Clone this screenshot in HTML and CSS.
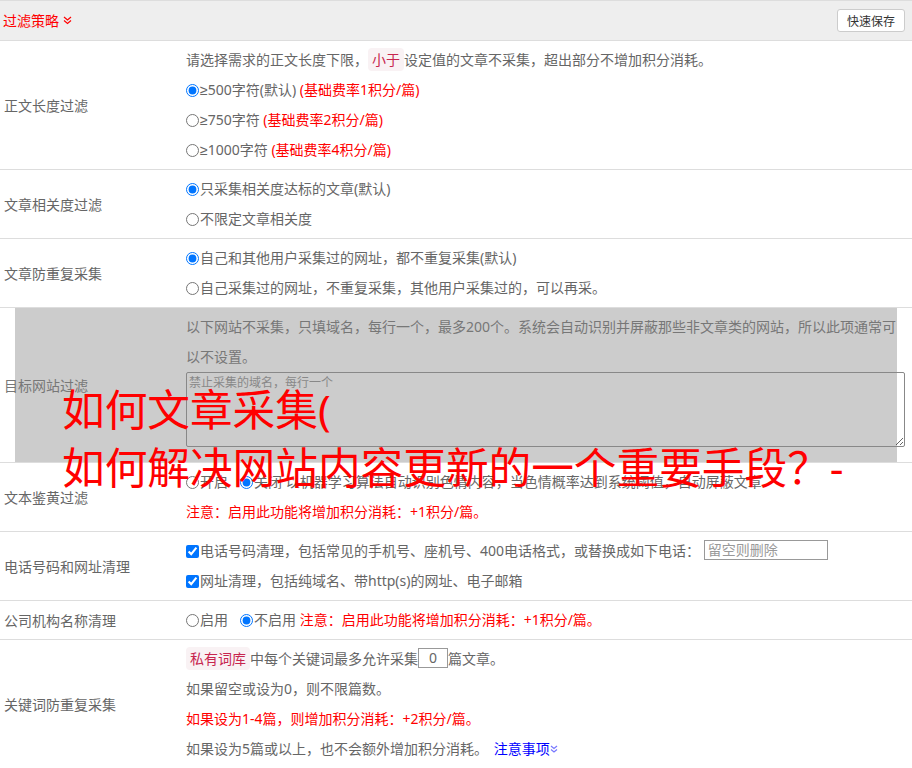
FILE: index.html
```html
<!DOCTYPE html>
<html lang="zh-CN">
<head>
  <meta charset="UTF-8">
  <title>过滤策略</title>
  <link rel="stylesheet" href="styles.css">
</head>
<body>
  <div class="panel">
    <div class="panel-head">
      <span class="head-title">过滤策略
        <svg class="chev" width="9" height="9" viewBox="0 0 9 9"><polyline points="1,1 4.5,4 8,1"/><polyline points="1,4.5 4.5,7.5 8,4.5"/></svg>
      </span>
      <button class="btn-save">快速保存</button>
    </div>

    <!-- 正文长度 -->
    <div class="row">
      <div class="row-label">正文长度过滤</div>
      <div class="row-body">
        <div class="line">请选择需求的正文长度下限，<code class="tag">小于</code>设定值的文章不采集，超出部分不增加积分消耗。</div>
        <div class="line"><label><input type="radio" name="len" checked><span class="ge">≥</span>500字符(默认)</label> <span class="warn">(基础费率1积分/篇)</span></div>
        <div class="line"><label><input type="radio" name="len"><span class="ge">≥</span>750字符</label> <span class="warn">(基础费率2积分/篇)</span></div>
        <div class="line"><label><input type="radio" name="len"><span class="ge">≥</span>1000字符</label> <span class="warn">(基础费率4积分/篇)</span></div>
      </div>
    </div>

    <div class="row">
      <div class="row-label">文章相关度过滤</div>
      <div class="row-body">
        <div class="line"><label><input type="radio" name="rel" checked>只采集相关度达标的文章(默认)</label></div>
        <div class="line"><label><input type="radio" name="rel">不限定文章相关度</label></div>
      </div>
    </div>

    <div class="row">
      <div class="row-label">文章防重复采集</div>
      <div class="row-body">
        <div class="line"><label><input type="radio" name="dup" checked>自己和其他用户采集过的网址，都不重复采集(默认)</label></div>
        <div class="line"><label><input type="radio" name="dup">自己采集过的网址，不重复采集，其他用户采集过的，可以再采。</label></div>
      </div>
    </div>

    <div class="row row-gray">
      <div class="row-label">目标网站过滤</div>
      <div class="row-body">
        <div class="line">以下网站不采集，只填域名，每行一个，最多200个。系统会自动识别并屏蔽那些非文章类的网站，所以此项通常可</div>
        <div class="line">以不设置。</div>
        <textarea class="domains" placeholder="禁止采集的域名，每行一个"></textarea>
      </div>
    </div>

    <div class="row">
      <div class="row-label">文本鉴黄过滤</div>
      <div class="row-body">
        <div class="line"><label class="opt"><input type="radio" name="porn">开启</label><label><input type="radio" name="porn" checked>关闭</label> 以机器学习算法自动识别色情内容，当色情概率达到系统阈值，自动屏蔽文章</div>
        <div class="line warn">注意：启用此功能将增加积分消耗：+1积分/篇。</div>
      </div>
    </div>

    <div class="row">
      <div class="row-label">电话号码和网址清理</div>
      <div class="row-body">
        <div class="line"><label><input type="checkbox" checked>电话号码清理，包括常见的手机号、座机号、400电话格式，或替换成如下电话：</label> <input class="phone" type="text" placeholder="留空则删除"></div>
        <div class="line"><label><input type="checkbox" checked>网址清理，包括纯域名、带http(s)的网址、电子邮箱</label></div>
      </div>
    </div>

    <div class="row">
      <div class="row-label">公司机构名称清理</div>
      <div class="row-body">
        <div class="line"><label class="opt"><input type="radio" name="org">启用</label><label><input type="radio" name="org" checked>不启用</label> <span class="warn">注意：启用此功能将增加积分消耗：+1积分/篇。</span></div>
      </div>
    </div>

    <div class="row">
      <div class="row-label">关键词防重复采集</div>
      <div class="row-body">
        <div class="line"><code class="tag">私有词库</code>中每个关键词最多允许采集<input class="num" type="text" value="0">篇文章。</div>
        <div class="line">如果留空或设为0，则不限篇数。</div>
        <div class="line warn">如果设为1-4篇，则增加积分消耗：+2积分/篇。</div>
        <div class="line">如果设为5篇或以上，也不会额外增加积分消耗。 <a class="more" href="#">注意事项<svg class="chev" width="8" height="8" viewBox="0 0 8 8"><polyline points="1,1 4,3.5 7,1"/><polyline points="1,4.5 4,7 7,4.5"/></svg></a></div>
      </div>
    </div>
  </div>

  <h1 class="float-title">如何文章采集(<br>如何解决网站内容更新的一个重要手段？-</h1>
</body>
</html>
```

FILE: styles.css
```css
/* Base */
body {
  margin: 0;
  font-family: "Noto Sans", "Noto Sans CJK SC", sans-serif;
  font-size: 14px;
  color: #666;
  background: #fff;
}

/* Panel header */
.panel-head {
  display: flex;
  justify-content: space-between;
  align-items: center;
  height: 39px;
  padding: 0 7px 0 3px;
  background: #eee;
  border-top: 1px solid #ddd;
  border-bottom: 1px solid #ddd;
}

.head-title {
  color: #f00;
  line-height: 20px;
}

.chev {
  fill: none;
  stroke: currentColor;
  stroke-width: 1.2;
  vertical-align: 1px;
}

.btn-save {
  width: 68px;
  height: 23px;
  padding: 0;
  font-family: inherit;
  font-size: 12px;
  color: #333;
  background: #fff;
  border: 1px solid #ccc;
  border-radius: 3px;
}

/* Rows */
.row {
  display: grid;
  grid-template-columns: 186px 1fr;
  padding: 4px 7px 4px 0;
  border-bottom: 1px solid #ddd;
}

.row-label {
  align-self: center;
  padding-left: 4px;
}

.line {
  height: 30px;
  line-height: 30px;
  white-space: nowrap;
}

.line input[type="radio"],
.line input[type="checkbox"] {
  margin: 0 1px 0 0;
  vertical-align: -2px;
}

.ge {
  font-family: "Liberation Sans", sans-serif;
}

.opt {
  margin-right: 12px;
}

.warn {
  color: #f00;
}

.tag {
  font-family: inherit;
  font-size: 14px;
  padding: 2px 4px;
  color: #c7254e;
  background: #f9f2f4;
  border-radius: 4px;
}

/* Grey block behind target site row */
.row-gray {
  color: #777;
  background: linear-gradient(#ccc, #ccc) 15px 0 / calc(100% - 30px) 100% no-repeat;
}

.domains {
  display: block;
  box-sizing: border-box;
  width: 100%;
  height: 75px;
  margin: 0 0 11px;
  padding: 2px 2px;
  font-family: inherit;
  font-size: 12px;
  line-height: 16px;
  background: transparent;
  border: 1px solid #888;
  border-radius: 2px;
}

.domains::placeholder {
  color: #888;
}

.phone,
.num {
  box-sizing: border-box;
  height: 20px;
  padding: 0 3px;
  font-family: inherit;
  font-size: 14px;
  color: #666;
  border: 1px solid #999;
  vertical-align: 1px;
}

.phone {
  width: 124px;
}

.phone::placeholder {
  color: #999;
}

.num {
  width: 30px;
  text-align: center;
}

.more {
  margin-left: 2px;
  color: #00f;
  text-decoration: none;
}

.more .chev {
  stroke: #77f;
}

/* Article title laid over the form */
.float-title {
  position: absolute;
  left: 62px;
  top: 380px;
  margin: 0;
  font-size: 32pt;
  font-weight: normal;
  line-height: 58px;
  color: #f00;
  white-space: nowrap;
}
```
